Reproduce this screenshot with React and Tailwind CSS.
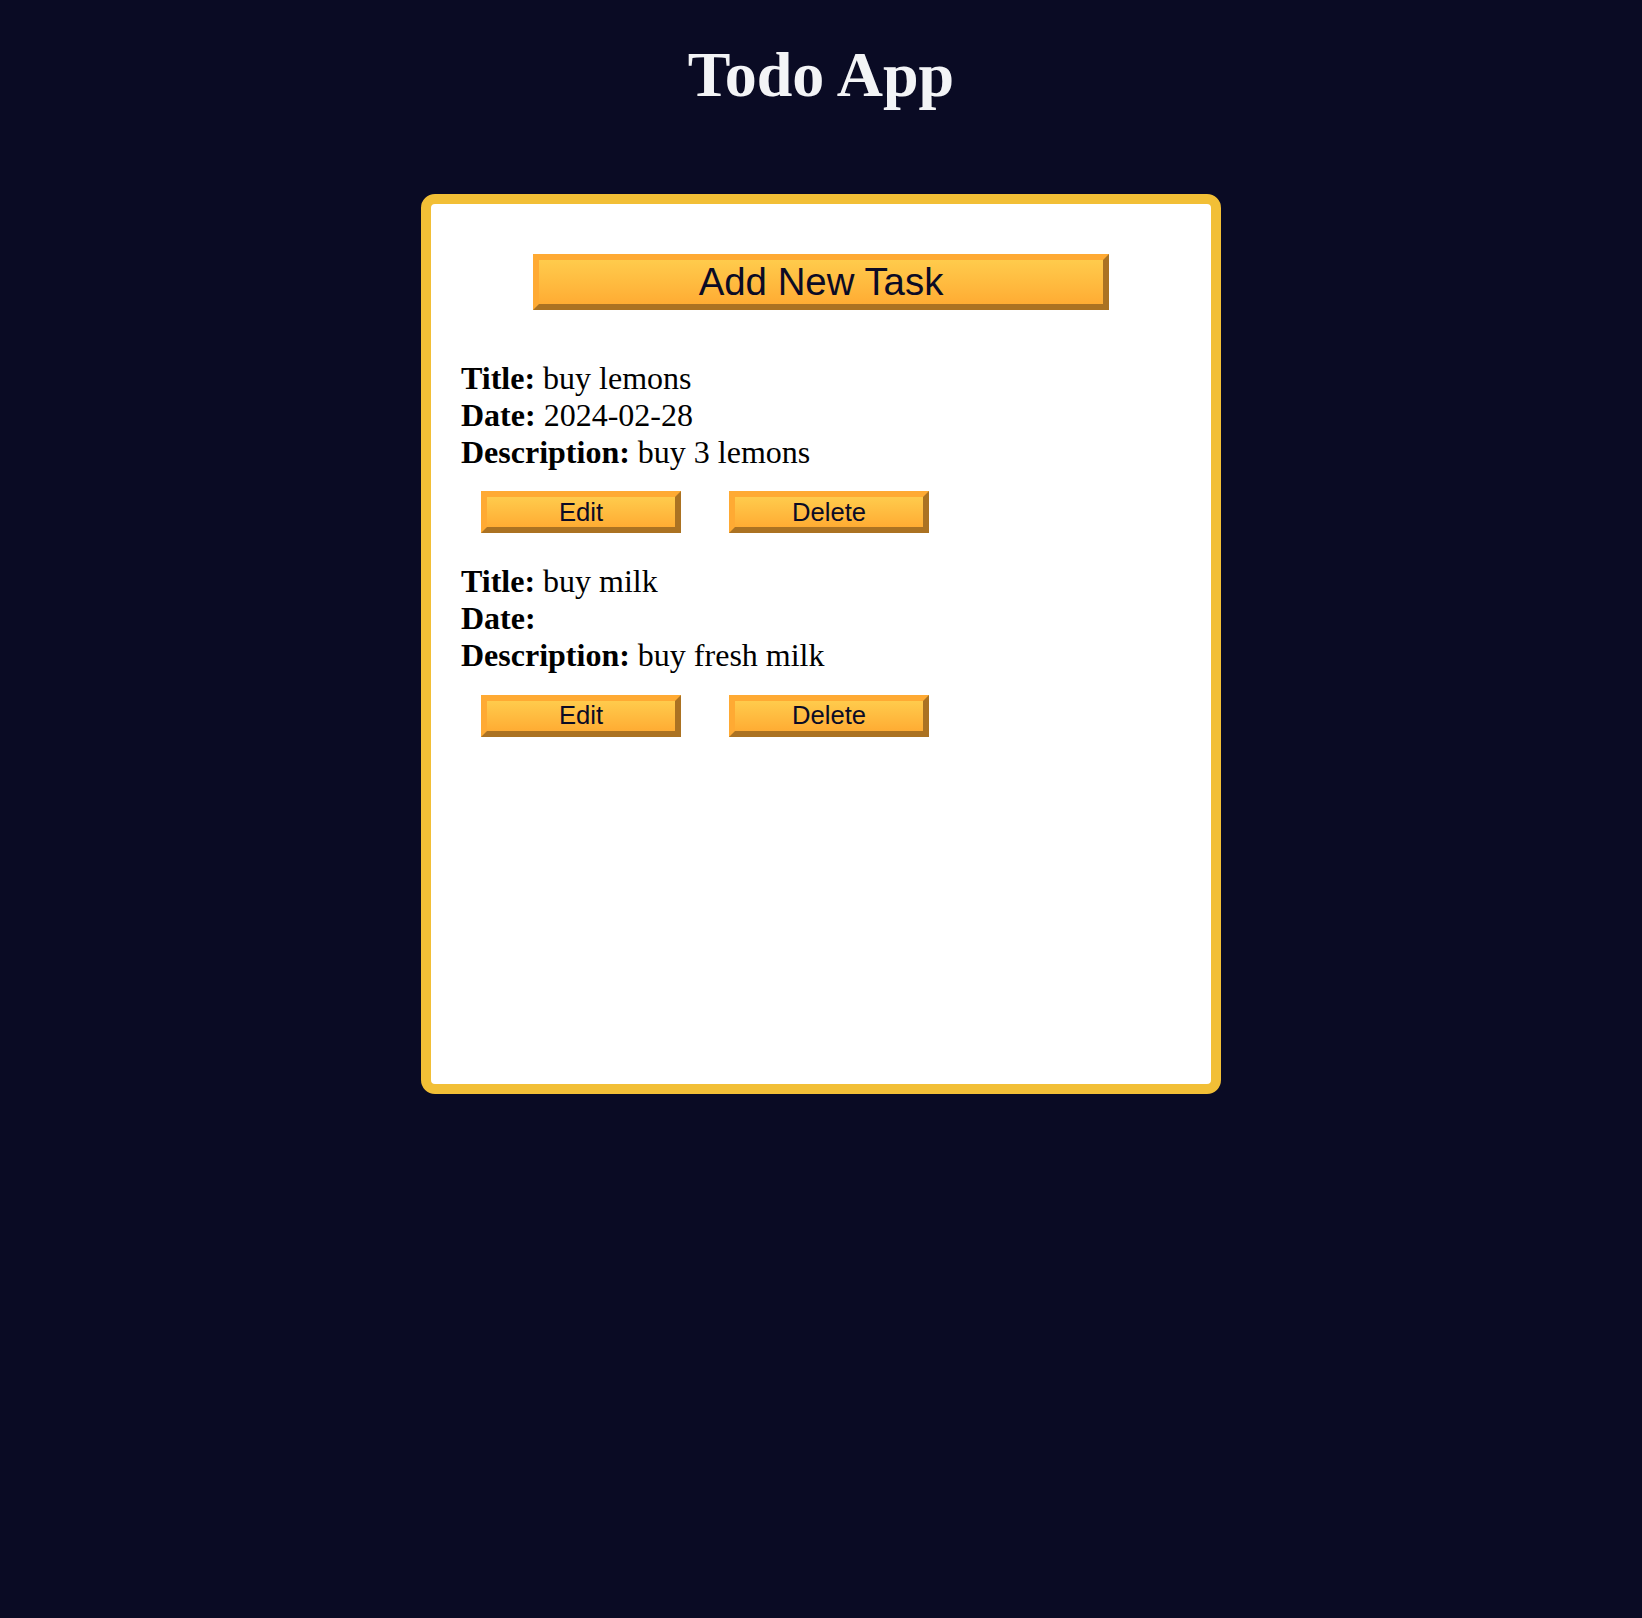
import { useState } from "react";

const initialTasks = [
  { id: 1, title: "buy lemons", date: "2024-02-28", description: "buy 3 lemons" },
  { id: 2, title: "buy milk", date: "", description: "buy fresh milk" },
];

const btn =
  "[border-style:outset] border-[6px] border-[#ffaa33] bg-linear-to-b from-[#ffcb4c] to-[#ffac33] font-['Liberation_Sans',Arial,sans-serif] text-[#0b0b25] leading-none";

export default function App() {
  const [tasks] = useState(initialTasks);

  return (
    <div className="min-h-screen bg-[#0a0b24] pt-[38px] font-['Liberation_Serif','Times_New_Roman',serif]">
      <h1 className="text-center text-[64px] font-bold leading-[73px] text-[#f3f4f6]">
        Todo App
      </h1>

      {/* Card */}
      <div className="mx-auto mt-[83px] h-[900px] w-[800px] rounded-[14px] border-[10px] border-[#f2bf36] bg-white px-[30px] pt-[50px]">
        <button className={`${btn} mx-auto flex h-[56px] w-[576px] items-center justify-center text-[38.4px]`}>
          Add New Task
        </button>

        <div className="mt-[50px] flex flex-col gap-[30px] text-[32px] leading-[36.8px] text-black">
          {tasks.map((task) => (
            <div key={task.id}>
              <p>
                <b>Title:</b> {task.title}
              </p>
              <p>
                <b>Date:</b> {task.date}
              </p>
              <p>
                <b>Description:</b> {task.description}
              </p>
              <div className="mt-[21px] flex gap-[48px] pl-[20px]">
                <button className={`${btn} flex h-[42px] w-[200px] items-center justify-center text-[25.6px]`}>
                  Edit
                </button>
                <button className={`${btn} flex h-[42px] w-[200px] items-center justify-center text-[25.6px]`}>
                  Delete
                </button>
              </div>
            </div>
          ))}
        </div>
      </div>
    </div>
  );
}
